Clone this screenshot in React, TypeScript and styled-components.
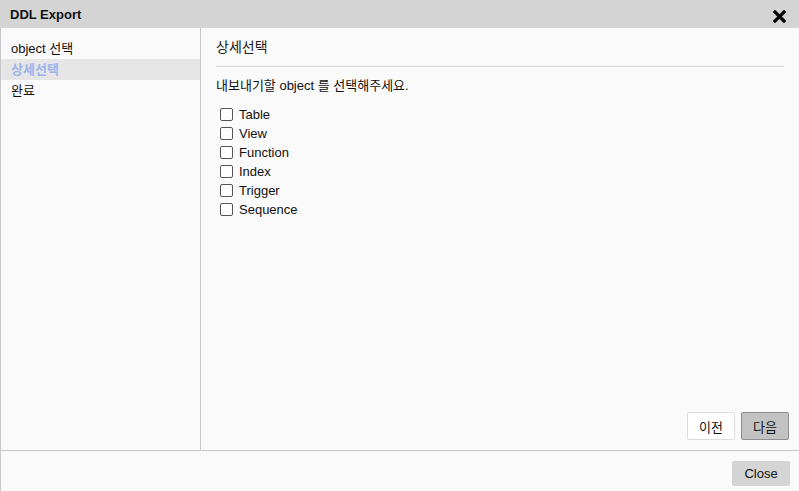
import React, { useState } from "react";
import styled, { createGlobalStyle } from "styled-components";

const GlobalStyle = createGlobalStyle`
  html, body {
    margin: 0;
    padding: 0;
    background: #fafafa;
  }
  body {
    font-family: "Liberation Sans", Arial, "Noto Sans CJK KR", sans-serif;
    color: #111;
  }
`;

const objectTypes = ["Table", "View", "Function", "Index", "Trigger", "Sequence"];
const steps = ["object 선택", "상세선택", "완료"];

const App: React.FC = () => {
  const [checked, setChecked] = useState<string[]>([]);
  const current = 1;

  const toggle = (name: string) => {
    setChecked(
      checked.includes(name)
        ? checked.filter((c) => c !== name)
        : [...checked, name]
    );
  };

  return (
    <>
      <GlobalStyle />
      <SDialog>
        <SHeader>
          <STitle>DDL Export</STitle>
          <SCloseIcon aria-label="close">
            <svg width="13" height="13" viewBox="0 0 13 13">
              <path
                d="M2 2 L11 11 M11 2 L2 11"
                stroke="#000"
                strokeWidth="3.2"
                strokeLinecap="square"
              />
            </svg>
          </SCloseIcon>
        </SHeader>
        <SBody>
          <SSidebar>
            {steps.map((step, i) => (
              <SStep key={step} active={i === current}>
                {step}
              </SStep>
            ))}
          </SSidebar>
          <SMain>
            <SSection>상세선택</SSection>
            <SDivider />
            <SGuide>내보내기할 object 를 선택해주세요.</SGuide>
            <SCheckList>
              {objectTypes.map((name) => (
                <SCheckRow key={name}>
                  <SCheckbox
                    type="checkbox"
                    checked={checked.includes(name)}
                    onChange={() => toggle(name)}
                  />
                  {name}
                </SCheckRow>
              ))}
            </SCheckList>
            <SNav>
              <SNavButton>이전</SNavButton>
              <SNavButton primary>다음</SNavButton>
            </SNav>
          </SMain>
        </SBody>
        <SFooter>
          <SCloseButton>Close</SCloseButton>
        </SFooter>
      </SDialog>
    </>
  );
};

const SDialog = styled.div`
  display: flex;
  flex-direction: column;
  width: 799px;
  height: 491px;
  background: #fafafa;
`;

const SHeader = styled.div`
  display: flex;
  align-items: center;
  justify-content: space-between;
  height: 28px;
  padding: 0 13px 0 10px;
  background: #d4d4d4;
  flex-shrink: 0;
`;

const STitle = styled.div`
  font-size: 13px;
  font-weight: bold;
  color: #111;
`;

const SCloseIcon = styled.div`
  display: flex;
  align-items: center;
  margin-top: 4px;
`;

const SBody = styled.div`
  display: flex;
  flex: 1;
  border-left: 1px solid #c8c8c8;
  border-bottom: 1px solid #c8c8c8;
`;

const SSidebar = styled.div`
  width: 199px;
  padding-top: 10px;
  border-right: 1px solid #c8c8c8;
`;

const SStep = styled.div<{ active?: boolean }>`
  height: 21px;
  line-height: 21px;
  padding-left: 10px;
  font-size: 13px;
  font-weight: ${(p) => (p.active ? "bold" : "normal")};
  color: ${(p) => (p.active ? "#9fb2ea" : "#111")};
  background: ${(p) => (p.active ? "#e5e5e5" : "transparent")};
`;

const SMain = styled.div`
  flex: 1;
  display: flex;
  flex-direction: column;
  padding: 10px 15px 10px 15px;
`;

const SSection = styled.div`
  font-size: 14px;
  line-height: 18px;
  color: #222;
`;

const SDivider = styled.div`
  height: 1px;
  background: #d6d6d6;
  margin: 10px 0 10px;
`;

const SGuide = styled.div`
  font-size: 13px;
  line-height: 18px;
  color: #111;
`;

const SCheckList = styled.div`
  display: flex;
  flex-direction: column;
  margin-top: 10px;
  padding-left: 4px;
`;

const SCheckRow = styled.label`
  display: flex;
  align-items: center;
  height: 19px;
  font-size: 13px;
  color: #111;
`;

const SCheckbox = styled.input`
  appearance: none;
  width: 13px;
  height: 13px;
  margin: 0 6px 0 0;
  border: 1px solid #555;
  border-radius: 2px;
  background: #fff;

  &:checked {
    background: #0075ff;
    border-color: #0075ff;
  }
`;

const SNav = styled.div`
  display: flex;
  justify-content: flex-end;
  gap: 6px;
  margin-top: auto;
  margin-right: -5px;
`;

const SNavButton = styled.button<{ primary?: boolean }>`
  width: 48px;
  height: 28px;
  font-family: inherit;
  font-size: 13px;
  color: #111;
  background: ${(p) => (p.primary ? "#c2c2c2" : "#fff")};
  border: 1px solid ${(p) => (p.primary ? "#8e8e8e" : "#dcdcdc")};
  border-radius: 2px;
  padding: 0;
`;

const SFooter = styled.div`
  display: flex;
  justify-content: flex-end;
  align-items: flex-end;
  height: 40px;
  padding: 0 9px 5px 0;
  box-sizing: border-box;
  border-left: 1px solid #c8c8c8;
  flex-shrink: 0;
`;

const SCloseButton = styled.button`
  width: 58px;
  height: 25px;
  font-family: inherit;
  font-size: 13px;
  color: #111;
  background: #d4d4d4;
  border: none;
  border-radius: 2px;
  padding: 0;
`;

export default App;
